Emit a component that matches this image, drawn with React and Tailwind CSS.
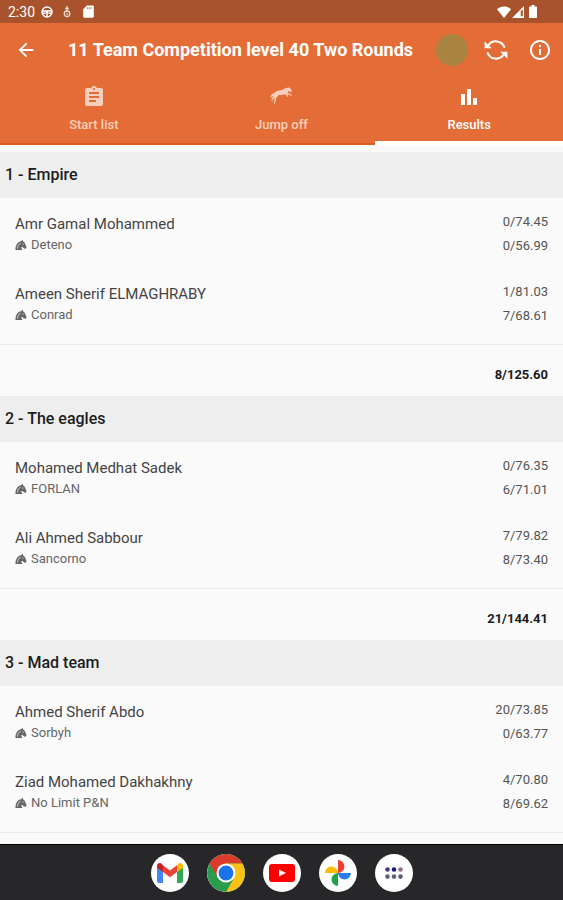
import { useState } from 'react';
import { clsx } from 'clsx';
import { MdArrowBack, MdAssignment, MdBarChart, MdInfoOutline } from 'react-icons/md';

const teams = [
  {
    rank: 1,
    name: 'Empire',
    total: '8/125.60',
    riders: [
      { name: 'Amr Gamal Mohammed', horse: 'Deteno', scores: ['0/74.45', '0/56.99'] },
      { name: 'Ameen Sherif ELMAGHRABY', horse: 'Conrad', scores: ['1/81.03', '7/68.61'] },
    ],
  },
  {
    rank: 2,
    name: 'The eagles',
    total: '21/144.41',
    riders: [
      { name: 'Mohamed Medhat Sadek', horse: 'FORLAN', scores: ['0/76.35', '6/71.01'] },
      { name: 'Ali Ahmed Sabbour', horse: 'Sancorno', scores: ['7/79.82', '8/73.40'] },
    ],
  },
  {
    rank: 3,
    name: 'Mad team',
    total: '',
    riders: [
      { name: 'Ahmed Sherif Abdo', horse: 'Sorbyh', scores: ['20/73.85', '0/63.77'] },
      { name: 'Ziad Mohamed Dakhakhny', horse: 'No Limit P&N', scores: ['4/70.80', '8/69.62'] },
    ],
  },
];

const tabs = [
  { id: 'start', label: 'Start list', Icon: MdAssignment },
  { id: 'jump', label: 'Jump off', Icon: JumpIcon },
  { id: 'results', label: 'Results', Icon: MdBarChart },
];

const apps = [
  { label: 'Gmail', Icon: GmailIcon },
  { label: 'Chrome', Icon: ChromeIcon },
  { label: 'YouTube', Icon: YouTubeIcon },
  { label: 'Photos', Icon: PhotosIcon },
  { label: 'All apps', Icon: AllAppsIcon },
];

function JumpIcon({ className }) {
  return (
    <svg viewBox="0 0 24 24" className={className} fill="currentColor" aria-hidden="true">
      <path d="M1.200 12.600c.4-2.400 2-4.200 4.200-4.600 1.600-2 3.600-2.700 6.400-2.800 1.500-.1 2.500-.6 3.600-1.400 1.300-.9 2.700-1.300 4.200-1l.8-.6.3.9c1 .6 1.700 1.600 2.300 2.900l-.6 1-1.100-.2-1.700-.9c-.6.7-.9 1.300-1 2l3.400 1 .9 2.200-.9.2-.8-1.500-3-.4 1.200 1.400-1 1.100-.6-.4.4-.8-2.600-1.500c-2.200.8-4 .9-5.800.8-.8 1.500-1.800 2.400-3 3.100l.2 2.300-1.500 3.800-.8-.3 1-3.600-.7-2.300-1.500 1.600.1 2-.8.1-.3-2.600 2-3.200c-1.500.3-2.600 1-3.400 2.400z" />
    </svg>
  );
}

function HorseIcon({ className }) {
  return (
    <svg viewBox="0 0 12 12" className={className} aria-hidden="true">
      <path d="M.5 11C.3 6.500 2.200 3 6.300 2L7.800.8l.3 1.700c1.300.6 2 1.700 2.400 3.200l1.100 2.400-.9 1.600-1.600-.2-1.600-1.500-1.500.4L7.500 11z" fill="#666" />
      <path d="M2.600 9.600C2.500 7 3.600 5 5.800 4" fill="none" stroke="#fafafa" strokeWidth=".7" />
      <circle cx="8" cy="5" r=".6" fill="#fafafa" />
    </svg>
  );
}

function RefreshIcon({ className }) {
  return (
    <svg viewBox="0 0 24 24" className={className} fill="none" stroke="currentColor" strokeWidth="2" aria-hidden="true">
      <path d="M4 8.200A9 9 0 0 1 20.600 9.800M20 15.800A9 9 0 0 1 3.400 14.200" />
      <path d="M.6 3.400V10.200H7.800ZM23.400 20.600V13.800H16.200Z" fill="currentColor" stroke="none" />
    </svg>
  );
}

function WheelIcon({ className }) {
  return (
    <svg viewBox="0 0 12 12" className={className} fill="none" stroke="currentColor" strokeWidth="1.500" aria-hidden="true">
      <circle cx="6" cy="6" r="5" />
      <path d="M1 5h10M6 6v5M1.500 7.500 4.500 7M10.500 7.500 7.500 7" />
      <circle cx="6" cy="6" r="1.300" fill="currentColor" stroke="none" />
    </svg>
  );
}

function PendantIcon({ className }) {
  return (
    <svg viewBox="0 0 12 12" className={className} fill="none" stroke="currentColor" strokeWidth="1.300" aria-hidden="true">
      <path d="M6 0v5M4.200 2.500h3.600" />
      <circle cx="6" cy="7.800" r="2.800" />
      <circle cx="6" cy="7.800" r=".9" fill="currentColor" stroke="none" />
    </svg>
  );
}

function SdCardIcon({ className }) {
  return (
    <svg viewBox="0 0 11 13" className={className} aria-hidden="true">
      <path d="M3.800.5H9.700Q10.800.5 10.800 1.600V11.600Q10.800 12.700 9.700 12.700H1.300Q.2 12.700.2 11.600V4.200z" fill="currentColor" />
      <path d="M4.300 2.200v2M6.200 2.200v2M8.100 2.200v2" stroke="#a8532b" strokeWidth=".8" />
    </svg>
  );
}

function WifiIcon({ className }) {
  return (
    <svg viewBox="0 0 14 12" className={className} fill="currentColor" aria-hidden="true">
      <path d="M7 12 0 3.200C2 1.400 4.400.5 7 .5s5 .9 7 2.700z" />
    </svg>
  );
}

function SignalIcon({ className }) {
  return (
    <svg viewBox="0 0 12 12" className={className} aria-hidden="true">
      <path d="M0 12 12 0v12z" fill="#fff" />
      <path d="M8.800 5.200 10.800 3.200v7H8.800z" fill="#a8532b" />
    </svg>
  );
}

function BatteryIcon({ className }) {
  return (
    <svg viewBox="0 0 8 13" className={className} fill="currentColor" aria-hidden="true">
      <path d="M2.500 0h3v1.500H7.200q.8 0 .8.800v9.900q0 .8-.8.800H.8q-.8 0-.8-.8V2.300q0-.8.800-.8h1.700z" />
    </svg>
  );
}

function GmailIcon() {
  return (
    <svg viewBox="0 0 26 20" className="h-5 w-[26px]" aria-hidden="true">
      <path d="M0 3.500 6 8v12H2a2 2 0 0 1-2-2z" fill="#4285f4" />
      <path d="M26 3.500 20 8v12h4a2 2 0 0 0 2-2z" fill="#34a853" />
      <path d="M20 2.500V9l6-4.300V3c0-2.600-2.800-3.800-4.700-2.200z" fill="#fbbc04" />
      <path d="M0 3v1.700L6 9V2.500L4.700.8C2.800-.8 0 .4 0 3z" fill="#c5221f" />
      <path d="M6 9V2.200l7 5.300 7-5.300V9l-7 5.300z" fill="#ea4335" />
    </svg>
  );
}

function ChromeIcon() {
  return (
    <svg viewBox="0 0 38 38" className="size-full" aria-hidden="true">
      <circle cx="19" cy="19" r="19" fill="#2a9d4c" />
      <path d="M2.550 9.500A19 19 0 0 1 35.450 9.500H19L10.800 23.700z" fill="#db3b2d" />
      <path d="M35.450 9.500A19 19 0 0 1 19 38L27.200 23.700 19 9.500z" fill="#fbc116" />
      <circle cx="19" cy="19" r="9.500" fill="#fff" />
      <circle cx="19" cy="19" r="7.400" fill="#1a73e8" />
    </svg>
  );
}

function YouTubeIcon() {
  return (
    <svg viewBox="0 0 26 18" className="h-[18px] w-[26px]" aria-hidden="true">
      <rect width="26" height="18" rx="3" fill="#f00" />
      <path d="M10 5.500v7L17 9z" fill="#fff" />
    </svg>
  );
}

function PhotosIcon() {
  return (
    <svg viewBox="0 0 28 28" className="size-7" aria-hidden="true">
      <path d="M14 1a6.500 6.500 0 0 1 0 13z" fill="#ea4335" />
      <path d="M27 14a6.500 6.500 0 0 1-13 0z" fill="#2a7de8" />
      <path d="M14 27a6.500 6.500 0 0 1 0-13z" fill="#1ea446" />
      <path d="M1 14a6.500 6.500 0 0 1 13 0z" fill="#fbbc04" />
    </svg>
  );
}

function AllAppsIcon() {
  return (
    <svg viewBox="0 0 18 12" className="h-3 w-[18px]" fill="#5c5f78" aria-hidden="true">
      <circle cx="2.500" cy="2.500" r="2.300" fill="#3f3f78" />
      <circle cx="9" cy="2.500" r="2.300" fill="#1c1c84" />
      <circle cx="15.500" cy="2.500" r="2.300" fill="#93707c" />
      <circle cx="2.500" cy="9.600" r="2.300" />
      <circle cx="9" cy="9.600" r="2.300" />
      <circle cx="15.500" cy="9.600" r="2.300" />
    </svg>
  );
}

function StatusBar() {
  return (
    <div className="flex h-[23px] shrink-0 items-center justify-between bg-[#a8532b] pr-[26px] pl-2 text-white">
      <div className="flex items-center">
        <span className="text-[14px] leading-4">2:30</span>
        <WheelIcon className="ml-1.5 size-3" />
        <PendantIcon className="ml-2 size-3 opacity-80" />
        <SdCardIcon className="ml-[10px] h-[13px] w-[11px]" />
      </div>
      <div className="flex items-center gap-px">
        <WifiIcon className="h-3 w-3.5" />
        <SignalIcon className="size-3" />
        <BatteryIcon className="ml-1 h-[13px] w-2" />
      </div>
    </div>
  );
}

function TeamResult({ team }) {
  return (
    <section>
      <h2 className="flex h-[46px] items-center bg-[#eeeeee] px-[5px] text-[16px] leading-5 font-medium text-[#1c1c1c]">
        {team.rank} - {team.name}
      </h2>
      <ul className="pb-1.5">
        {team.riders.map((rider) => (
          <li key={rider.name} className="flex h-[70px] justify-between px-[15px]">
            <div className="pt-4">
              <p className="text-[15px] leading-5 text-[#444444]">{rider.name}</p>
              <p className="flex items-center gap-1 text-[13px] leading-[22px] text-[#666666]">
                <HorseIcon className="size-3" />
                {rider.horse}
              </p>
            </div>
            <div className="pt-3 text-right text-[13px] leading-6 text-[#555555]">
              {rider.scores.map((score) => (
                <p key={score}>{score}</p>
              ))}
            </div>
          </li>
        ))}
      </ul>
      <p className="h-[52px] border-t border-[#ebebeb] px-[15px] pt-5 text-right text-[13px] leading-5 font-bold text-[#1c1c1c]">
        {team.total}
      </p>
    </section>
  );
}

export default function App() {
  const [activeTab, setActiveTab] = useState('results');

  return (
    <div className="flex h-screen flex-col bg-[#fafafa] font-['Roboto',sans-serif]">
      <StatusBar />
      <header className="shrink-0 bg-[#e46d37] text-white">
        <div className="flex h-[54px] items-center px-[11px]">
          <button type="button" aria-label="Back" className="flex size-[30px] items-center justify-center">
            <MdArrowBack className="size-[22px]" />
          </button>
          <h1 className="ml-[27px] flex-1 truncate text-[18px] leading-6 font-bold">
            11 Team Competition level 40 Two Rounds
          </h1>
          <span className="size-8 rounded-full bg-[#a88440]" />
          <button type="button" aria-label="Refresh" className="ml-4 flex items-center justify-center">
            <RefreshIcon className="size-6" />
          </button>
          <button type="button" aria-label="Info" className="ml-5 flex items-center justify-center">
            <MdInfoOutline className="size-6" />
          </button>
        </div>
        <div role="tablist" className="grid grid-cols-3">
          {tabs.map(({ id, label, Icon }) => (
            <button
              key={id}
              type="button"
              role="tab"
              aria-selected={activeTab === id}
              onClick={() => setActiveTab(id)}
              className={clsx(
                'flex h-[68px] flex-col items-center pt-2 text-[13px] leading-4 font-medium',
                activeTab === id ? 'border-b-4 border-white text-white' : 'border-b-2 border-[#dd5c1e] text-[#f8cfbc]'
              )}
            >
              <Icon className="size-6" />
              <span className="mt-2">{label}</span>
            </button>
          ))}
        </div>
      </header>
      <main className="min-h-0 flex-1 overflow-hidden pt-[7px]">
        {teams.map((team) => (
          <TeamResult key={team.rank} team={team} />
        ))}
      </main>
      <nav className="flex h-14 shrink-0 items-center justify-center gap-[18px] border-t border-black bg-[#27272a]">
        {apps.map(({ label, Icon }) => (
          <button
            key={label}
            type="button"
            aria-label={label}
            className="flex size-[38px] items-center justify-center overflow-hidden rounded-full bg-white"
          >
            <Icon />
          </button>
        ))}
      </nav>
    </div>
  );
}
